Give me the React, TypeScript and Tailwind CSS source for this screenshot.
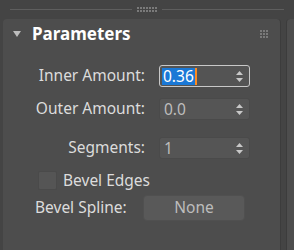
const font = { fontFamily: '"Noto Sans", "Open Sans", sans-serif' };

const Spinner = ({ value, active }: { value: string; active?: boolean }) => (
  <div
    className={
      "flex items-center h-[22px] w-[91px] rounded-[3px] pl-[2px] pr-[6px] " +
      (active
        ? "bg-[#545454] border border-[#c8c8c8]"
        : "bg-[#555555] border border-[#4a4a4a]")
    }
  >
    <div className="flex-1 flex items-center h-full">
      {active ? (
        <span className="bg-[#1a78d6] text-white leading-[17px] h-[17px] pl-[1px] pr-[1px] border-r-2 border-[#ff8a1f]">
          {value}
        </span>
      ) : (
        <span className="text-[#bdbdbd] leading-[17px] pl-[2px]">{value}</span>
      )}
    </div>
    <div className="flex flex-col items-center gap-[3px] text-[#c8c8c8]">
      <svg width="7" height="4" viewBox="0 0 7 4" className="block">
        <path d="M3.5 0 L7 4 L0 4 Z" fill="currentColor" />
      </svg>
      <svg width="7" height="4" viewBox="0 0 7 4" className="block">
        <path d="M0 0 L7 0 L3.5 4 Z" fill="currentColor" />
      </svg>
    </div>
  </div>
);

const Row = ({ label, children }: { label: string; children: React.ReactNode }) => (
  <div className="flex items-center h-[22px]">
    <div className="w-[142px] text-right text-[#dcdcdc] whitespace-nowrap">{label}</div>
    <div className="ml-[14px]">{children}</div>
  </div>
);

const Dots = ({ cols, rows }: { cols: number; rows: number }) => (
  <div
    className="grid gap-[1px]"
    style={{ gridTemplateColumns: `repeat(${cols}, 2px)` }}
  >
    {Array.from({ length: cols * rows }).map((_, i) => (
      <div key={i} className="w-[2px] h-[2px] bg-[#7a7a7a]" />
    ))}
  </div>
);

export default function App() {
  return (
    <div
      className="w-[294px] h-[250px] bg-[#444444] overflow-hidden text-[15.5px]"
      style={font}
    >
      <div className="flex items-center h-[19px] px-[10px] gap-[5px]">
        <div className="flex-1 h-[1px] bg-[#5e5e5e]" />
        <Dots cols={7} rows={2} />
        <div className="flex-1 h-[1px] bg-[#5e5e5e]" />
      </div>
      <div className="flex h-[231px]">
        <div className="ml-[3px] w-[278px] bg-[#4d4d4d] rounded-tl-[4px] rounded-tr-[4px] border-r border-[#3c3c3c]">
          <div className="flex items-center h-[24px] pl-[10px] pr-[12px] mt-[3px]">
            <svg width="8" height="6" viewBox="0 0 8 6" className="mr-[11px]">
              <path d="M0 0 L8 0 L4 6 Z" fill="#bdbdbd" />
            </svg>
            <span className="flex-1 font-bold text-[17px] text-white">Parameters</span>
            <Dots cols={3} rows={3} />
          </div>
          <div className="mt-[19px] flex flex-col">
            <Row label="Inner Amount:">
              <Spinner value="0.36" active />
            </Row>
            <div className="mt-[11px]">
              <Row label="Outer Amount:">
                <Spinner value="0.0" />
              </Row>
            </div>
            <div className="mt-[17px]">
              <Row label="Segments:">
                <Spinner value="1" />
              </Row>
            </div>
          </div>
          <div className="flex items-center h-[19px] mt-[12px] pl-[35px]">
            <div className="w-[19px] h-[19px] rounded-[2px] bg-[#555555] border border-[#4a4a4a]" />
            <span className="ml-[6px] text-[#dcdcdc] whitespace-nowrap">Bevel Edges</span>
          </div>
          <div className="flex items-center h-[26px] mt-[5px] pl-[32px]">
            <span className="text-[#dcdcdc] w-[108px] whitespace-nowrap">Bevel Spline:</span>
            <div className="w-[102px] h-[26px] rounded-[4px] bg-[#595959] border border-[#505050] flex items-center justify-center text-[#bdbdbd]">
              None
            </div>
          </div>
        </div>
        <div className="ml-[5px] flex-1 bg-[#4d4d4d] border-l border-[#3c3c3c] rounded-tl-[4px]" />
      </div>
    </div>
  );
}
